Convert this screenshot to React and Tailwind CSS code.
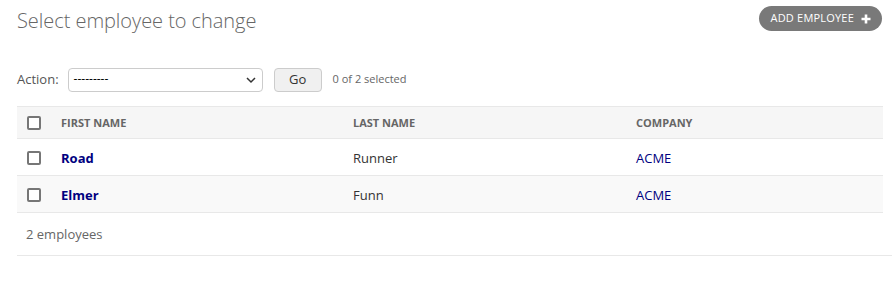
import React from "react";

function Box() {
  return <span className="inline-block w-[14px] h-[14px] border-2 border-[#767676] rounded-[2px] bg-white align-middle" />;
}

export default function App() {
  const rows = [
    { first: "Road", last: "Runner", company: "ACME", bg: "bg-white" },
    { first: "Elmer", last: "Funn", company: "ACME", bg: "bg-[#f9f9f9]" },
  ];
  return (
    <div className="w-[892px] h-[298px] bg-white text-[#333] font-['Open_Sans',sans-serif] overflow-hidden">
      <div className="pl-[17px]">
        <div className="flex items-start justify-between h-[53px]">
          <h1 className="text-[20px] font-light text-[#666] mt-[7px] leading-[28px] tracking-[-0.05px]">Select employee to change</h1>
          <a className="mt-[6px] mr-[10px] h-[25px] pl-[12px] pr-[11px] rounded-full bg-[#797979] text-white text-[11px] flex items-center gap-[7px] tracking-[0.2px]">
            ADD EMPLOYEE
            <svg width="10" height="10" viewBox="0 0 10 10"><path d="M5 0.5v9M0.5 5h9" stroke="white" strokeWidth="2.6" /></svg>
          </a>
        </div>
        <div className="flex items-center h-[53px] text-[13px]">
          <span className="text-[#555] mr-[9px]">Action:</span>
          <div className="relative w-[195px] h-[24px] border border-[#ccc] rounded-[4px] flex items-center px-[5px] text-[12px] text-black">
            <span className="leading-none -mt-[2px]">---------</span>
            <svg className="absolute right-[6px] top-[8px]" width="10" height="7" viewBox="0 0 10 7"><path d="M1 1l4 4 4-4" fill="none" stroke="#333" strokeWidth="1.5" /></svg>
          </div>
          <button className="ml-[11px] w-[48px] h-[24px] border border-[#ccc] rounded-[4px] bg-[#f0f0f0] text-[13px] text-[#333]">Go</button>
          <span className="ml-[11px] text-[11px] text-[#666]">0 of 2 selected</span>
        </div>
        <table className="w-[866px] border-collapse text-[13px]">
          <colgroup>
            <col className="w-[36px]" />
            <col className="w-[292px]" />
            <col className="w-[283px]" />
            <col />
          </colgroup>
          <thead>
            <tr className="bg-[#f6f6f6] h-[32px] border-t border-b border-[#e8e8e8]">
              <th className="pl-[10px] text-left"><Box /></th>
              <th className="pl-[8px] pt-[2px] text-left text-[11px] font-bold text-[#666]">FIRST NAME</th>
              <th className="pl-[8px] pt-[2px] text-left text-[11px] font-bold text-[#666]">LAST NAME</th>
              <th className="pl-[8px] pt-[2px] text-left text-[11px] font-bold text-[#666]">COMPANY</th>
            </tr>
          </thead>
          <tbody>
            {rows.map((r) => (
              <tr key={r.first} className={`${r.bg} h-[37px] border-b border-[#e8e8e8]`}>
                <td className="pl-[10px]"><Box /></td>
                <td className="pl-[8px] pt-[3px] font-bold text-[#000080]">{r.first}</td>
                <td className="pl-[8px] pt-[3px] text-[#333]">{r.last}</td>
                <td className="pl-[8px] pt-[3px] text-[#000080]">{r.company}</td>
              </tr>
            ))}
          </tbody>
        </table>
        <div className="h-[43px] border-b border-[#e8e8e8] flex items-center pl-[9px] pt-[2px] text-[13px] text-[#666]">2 employees</div>
      </div>
    </div>
  );
}
